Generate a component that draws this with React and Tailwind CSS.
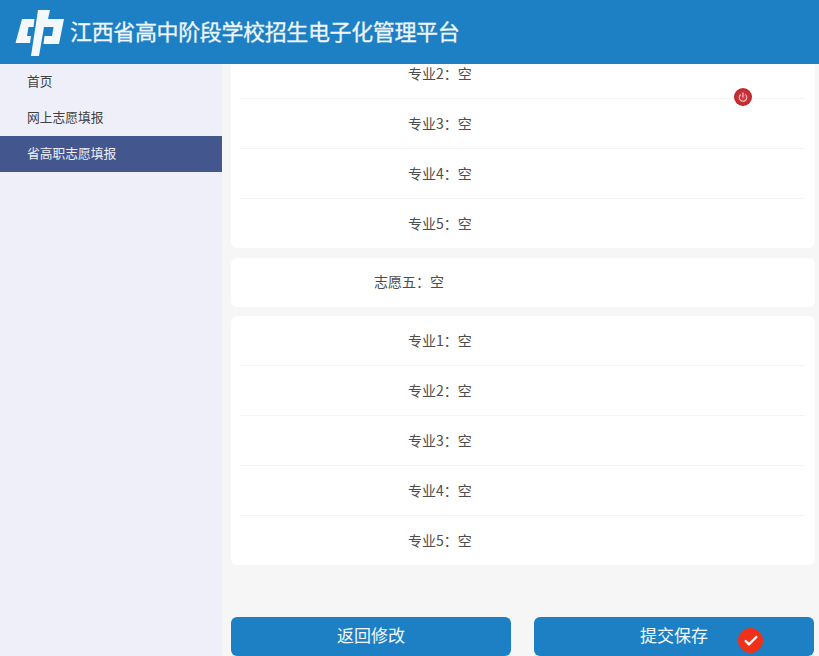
import { Power, Check } from 'lucide-react';

const FONT = "font-['Microsoft_YaHei','Noto_Sans_CJK_SC','Noto_Sans',sans-serif]";

const NAV = [
  { label: '首页' },
  { label: '网上志愿填报' },
  { label: '省高职志愿填报', active: true },
];

function Logo() {
  return (
    <svg viewBox="0 0 50 46" className="h-[46px] w-[50px] shrink-0 mt-[2px]" fill="#f2f8fc">
      <path d="M7 9 H19.5 L18.5 17 H13.5 L12 26 H16 L15 33 H0.5 Z" />
      <path d="M23 0 H35 L33 9 H49 L44 34 H28.5 L29.5 26 H37 L38.5 17 H29 L24 46 H16 Z" />
    </svg>
  );
}

function Row({ label, last }) {
  return (
    <div className={`ml-[9px] mr-[10px] flex items-center pl-[168px] pb-[2px] text-sm text-[#4d4d4d] ${last ? 'h-[49px]' : 'h-[50px] border-b border-[#f4f4f4]'}`}>
      {label}{'\uFF1A'}空
    </div>
  );
}

function Card({ labels, className = '' }) {
  return (
    <div className={`bg-white rounded-md overflow-hidden ${className}`}>
      {labels.map((label, i) => (
        <Row key={label} label={label} last={i === labels.length - 1} />
      ))}
    </div>
  );
}

export default function App() {
  return (
    <div className={`${FONT} relative w-[819px] h-[656px] overflow-hidden flex flex-col bg-[#f6f6f6]`}>
      <header className="h-16 shrink-0 bg-[#1d80c4] flex items-center pl-[15px] gap-[5px]">
        <Logo />
        <h1 className="text-[22px] text-[#eef6fb] tracking-[-0.37px] pb-1 [-webkit-text-stroke:0.3px_#eef6fb]">江西省高中阶段学校招生电子化管理平台</h1>
      </header>

      <div className="flex flex-1 min-h-0">
        <aside className="w-[222px] shrink-0 bg-[#eeeff9]">
          {NAV.map((item) => (
            <div
              key={item.label}
              className={`h-9 flex items-center pl-[27px] pb-[2px] text-[12.75px] ${item.active ? 'bg-[#43578e] text-[#eef0f6]' : 'text-[#3f3f3f]'}`}
            >
              {item.label}
            </div>
          ))}
        </aside>

        <main className="flex-1 min-w-0 pl-[9px] pr-1 flex flex-col">
          <div className="flex-1 min-h-0 overflow-hidden">
            <Card labels={['专业2', '专业3', '专业4', '专业5']} className="-mt-[15px]" />
            <div className="mt-[10px] h-[49px] bg-white rounded-md flex items-center pl-[143px] pb-1 text-sm text-[#4d4d4d]">
              志愿五{'\uFF1A'}空
            </div>
            <Card labels={['专业1', '专业2', '专业3', '专业4', '专业5']} className="mt-[9px]" />
          </div>
          <div className="flex justify-between pr-px">
            <button className="w-[280px] h-[39px] pb-1 rounded-md bg-[#1d80c4] text-[#f2f8fc] text-[17px]">返回修改</button>
            <button className="w-[280px] h-[39px] pb-1 rounded-md bg-[#1d80c4] text-[#f2f8fc] text-[17px]">提交保存</button>
          </div>
        </main>
      </div>

      {/* floating buttons */}
      <div className="absolute left-[734px] top-[88px] w-[18px] h-[18px] rounded-full bg-[radial-gradient(circle,#d8444a_0%,#b3191f_100%)] flex items-center justify-center">
        <Power size={10} color="#f6d5d5" strokeWidth={2.5} />
      </div>
      <div className="absolute left-[738px] top-[628px] w-[25px] h-[25px] rounded-full bg-[#f0311a] flex items-center justify-center">
        <Check size={16} color="#fff" strokeWidth={3.5} />
      </div>
    </div>
  );
}
